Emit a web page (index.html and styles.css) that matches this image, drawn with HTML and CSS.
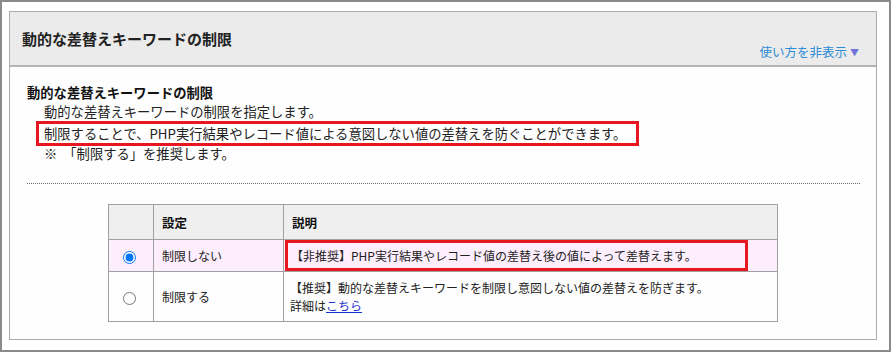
FILE: index.html
```html
<!DOCTYPE html>
<html lang="ja">
<head>
<meta charset="utf-8">
<link rel="stylesheet" href="styles.css">
</head>
<body>
<div class="frame">
  <div class="panel">
    <div class="panel-head">
      <h1 class="title">動的な差替えキーワードの制限</h1>
      <a class="toggle" href="#">使い方を非表示<span class="tri">▼</span></a>
    </div>
    <div class="panel-body">
      <div class="heading">動的な差替えキーワードの制限</div>
      <div class="line">動的な差替えキーワードの制限を指定します。</div>
      <div class="line boxed">制限することで、PHP実行結果やレコード値による意図しない値の差替えを防ぐことができます。</div>
      <div class="line last"><span class="note">※</span>「制限する」を推奨します。</div>
      <div class="dotted"></div>
      <table class="opts">
        <tr class="head-row">
          <th class="c-radio"></th>
          <th class="c-set">設定</th>
          <th class="c-desc">説明</th>
        </tr>
        <tr class="row-sel">
          <td class="c-radio"><input type="radio" name="lim" checked></td>
          <td class="c-set">制限しない</td>
          <td class="c-desc tight"><div class="cellbox">【非推奨】PHP実行結果やレコード値の差替え後の値によって差替えます。</div></td>
        </tr>
        <tr class="row-two">
          <td class="c-radio"><input type="radio" name="lim"></td>
          <td class="c-set">制限する</td>
          <td class="c-desc">【推奨】動的な差替えキーワードを制限し意図しない値の差替えを防ぎます。<br>詳細は<a class="more" href="#">こちら</a></td>
        </tr>
      </table>
    </div>
  </div>
</div>
</body>
</html>
```

FILE: styles.css
```css
html, body {
  margin: 0;
  padding: 0;
  background: #ffffff;
}
body {
  font-family: "Noto Sans CJK JP", "Noto Sans", sans-serif;
  color: #222;
}
.frame {
  box-sizing: border-box;
  width: 891px;
  height: 352px;
  border: 2px solid #8a8a8a;
  padding: 9px 12px 0 7px;
}
.panel {
  box-sizing: border-box;
  height: 329px;
  border: 1px solid #acacac;
  background: #fefefe;
}
.panel-head {
  box-sizing: border-box;
  height: 55px;
  background: #ebebeb;
  border-bottom: 2px solid #b4b4b4;
  display: flex;
  justify-content: space-between;
  align-items: flex-start;
  padding: 0 17px 0 12px;
}
.title {
  margin: 17px 0 0;
  font-size: 15px;
  line-height: 20px;
  font-weight: bold;
  color: #222;
}
.toggle {
  margin-top: 31px;
  font-size: 12.5px;
  line-height: 17px;
  color: #2d8bd6;
  text-decoration: none;
}
.tri {
  font-size: 9px;
  color: #7272d8;
  margin-left: 3px;
  vertical-align: 1px;
}
.panel-body {
  padding: 16px 16px 0 17px;
  font-size: 13.3px;
}
.heading {
  font-weight: bold;
  line-height: 19px;
  color: #111;
}
.line {
  margin-left: 17px;
  line-height: 20px;
  color: #222;
}
.boxed {
  width: fit-content;
  margin-left: 9px;
  margin-top: -1px;
  border: 3px solid #e8161f;
  padding: 1px 10px 1px 5px;
  line-height: 17px;
}
.last {
  line-height: 15px;
}
.note {
  margin-right: 6px;
}
.dotted {
  margin-top: 22px;
  border-top: 1px dotted #6a6a6a;
}
.opts {
  margin: 20px 0 0 81px;
  width: 670px;
  border-collapse: collapse;
  font-size: 12px;
}
.opts th, .opts td {
  border: 1px solid #a0a0a0;
  padding: 0 0 0 8px;
  text-align: left;
  vertical-align: middle;
}
.opts th {
  background: #efefef;
  font-weight: bold;
  font-size: 12.5px;
  height: 34px;
  color: #111;
}
.opts .c-radio {
  width: 44px;
  padding: 0;
  text-align: center;
}
.opts .c-set {
  width: 121px;
}
.opts input {
  margin: 0 3px 0 0;
  width: 13px;
  height: 13px;
  vertical-align: middle;
}
.row-sel td {
  background: #fdeefd;
  height: 31px;
}
.opts .tight {
  padding: 0 0 0 1px;
}
.cellbox {
  box-sizing: border-box;
  width: 463px;
  height: 31px;
  border: 3px solid #e8161f;
  padding: 0 0 0 3px;
  line-height: 25px;
}
.row-two td {
  height: 49px;
  line-height: 18px;
}
.row-two .c-desc {
  padding-left: 6px;
}
.more {
  color: #1a35cc;
  text-decoration: underline;
}
```
